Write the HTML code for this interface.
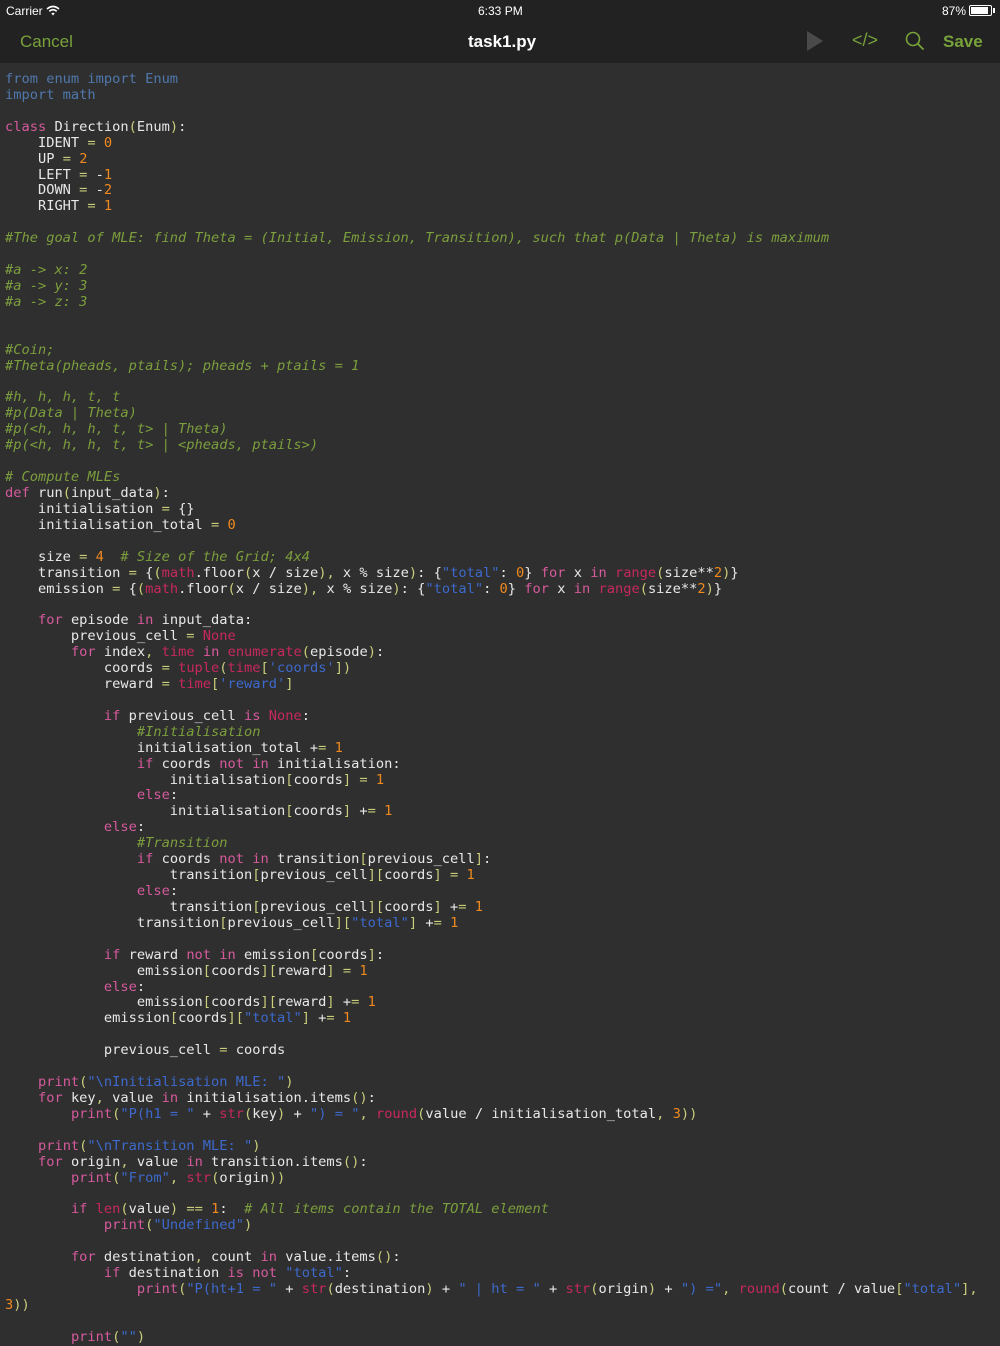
<!DOCTYPE html>
<html><head><meta charset="utf-8"><style>
*{margin:0;padding:0;box-sizing:border-box}
body{width:1000px;height:1334px;overflow:hidden;background:#2f2f2f;font-family:"Liberation Sans",sans-serif}
#top{position:absolute;left:0;top:0;width:1000px;height:63px;background:#222222}
.sb{position:absolute;top:4px;font-size:12px;color:#fff}
.nav{position:absolute;top:32px;font-size:17px;color:#78a23a}
#code{position:absolute;left:5px;top:72px;font-family:"DejaVu Sans Mono","Liberation Mono",monospace;font-size:13.7px;line-height:15.92px;white-space:pre;color:#e8e8e8}
.k{color:#d65a9c}.b{color:#c7285e}.s{color:#3d69cc}.n{color:#f08a1e}.c{color:#7c9e3d;font-style:italic}.p{color:#c9cc7a}.i{color:#5078ac}
</style></head><body>
<div id="top">
<div class="sb" style="left:6px">Carrier <svg width="14" height="11" viewBox="0 0 14 11" style="vertical-align:-1px"><path d="M1 4 Q7 -1 13 4" stroke="#fff" stroke-width="1.6" fill="none"/><path d="M3.3 6.3 Q7 3 10.7 6.3" stroke="#fff" stroke-width="1.6" fill="none"/><path d="M5.3 8.4 L7 10.5 L8.7 8.4 Q7 7 5.3 8.4Z" fill="#fff"/></svg></div>
<div class="sb" style="left:478px">6:33 PM</div>
<div class="sb" style="left:942px">87%</div>
<div style="position:absolute;left:969px;top:5px;width:23px;height:11px;border:1px solid #fff;border-radius:2px"><div style="margin:1px;width:17px;height:7px;background:#fff"></div></div>
<div style="position:absolute;left:993px;top:8px;width:2px;height:5px;background:#fff"></div>
<div class="nav" style="left:20px">Cancel</div>
<div class="nav" style="left:468px;color:#fff;font-weight:bold;font-size:17px">task1.py</div>
<svg style="position:absolute;left:806px;top:31px" width="18" height="20"><path d="M1 0 L17 10 L1 20Z" fill="#4a4a4a"/></svg>
<div class="nav" style="left:852px;top:30px;font-size:18px">&lt;/&gt;</div>
<svg style="position:absolute;left:905px;top:31px" width="20" height="20"><circle cx="8" cy="8" r="6.5" stroke="#78a23a" stroke-width="1.6" fill="none"/><path d="M12.6 12.6 L18.5 18.5" stroke="#78a23a" stroke-width="1.8"/></svg>
<div class="nav" style="left:943px;font-weight:bold">Save</div>
</div>
<div id="code"><span class="i">from enum import Enum</span>
<span class="i">import math</span>

<span class="k">class</span> Direction<span class="p">(</span>Enum<span class="p">)</span>:
    IDENT <span class="p">=</span> <span class="n">0</span>
    UP <span class="p">=</span> <span class="n">2</span>
    LEFT <span class="p">=</span> -<span class="n">1</span>
    DOWN <span class="p">=</span> -<span class="n">2</span>
    RIGHT <span class="p">=</span> <span class="n">1</span>

<span class="c">#The goal of MLE: find Theta = (Initial, Emission, Transition), such that p(Data | Theta) is maximum</span>

<span class="c">#a -&gt; x: 2</span>
<span class="c">#a -&gt; y: 3</span>
<span class="c">#a -&gt; z: 3</span>


<span class="c">#Coin;</span>
<span class="c">#Theta(pheads, ptails); pheads + ptails = 1</span>

<span class="c">#h, h, h, t, t</span>
<span class="c">#p(Data | Theta)</span>
<span class="c">#p(&lt;h, h, h, t, t&gt; | Theta)</span>
<span class="c">#p(&lt;h, h, h, t, t&gt; | &lt;pheads, ptails&gt;)</span>

<span class="c"># Compute MLEs</span>
<span class="k">def</span> run<span class="p">(</span>input_data<span class="p">)</span>:
    initialisation <span class="p">=</span> {}
    initialisation_total <span class="p">=</span> <span class="n">0</span>

    size <span class="p">=</span> <span class="n">4</span>  <span class="c"># Size of the Grid; 4x4</span>
    transition <span class="p">=</span> {<span class="p">(</span><span class="b">math</span>.floor<span class="p">(</span>x / size<span class="p">),</span> x % size<span class="p">)</span>: {<span class="s">"total"</span>: <span class="n">0</span>} <span class="k">for</span> x <span class="k">in</span> <span class="b">range</span><span class="p">(</span>size**<span class="n">2</span><span class="p">)</span>}
    emission <span class="p">=</span> {<span class="p">(</span><span class="b">math</span>.floor<span class="p">(</span>x / size<span class="p">),</span> x % size<span class="p">)</span>: {<span class="s">"total"</span>: <span class="n">0</span>} <span class="k">for</span> x <span class="k">in</span> <span class="b">range</span><span class="p">(</span>size**<span class="n">2</span><span class="p">)</span>}

    <span class="k">for</span> episode <span class="k">in</span> input_data:
        previous_cell <span class="p">=</span> <span class="b">None</span>
        <span class="k">for</span> index<span class="p">,</span> <span class="b">time</span> <span class="k">in</span> <span class="b">enumerate</span><span class="p">(</span>episode<span class="p">)</span>:
            coords <span class="p">=</span> <span class="b">tuple</span><span class="p">(</span><span class="b">time</span><span class="p">[</span><span class="s">'coords'</span><span class="p">])</span>
            reward <span class="p">=</span> <span class="b">time</span><span class="p">[</span><span class="s">'reward'</span><span class="p">]</span>

            <span class="k">if</span> previous_cell <span class="k">is</span> <span class="b">None</span>:
                <span class="c">#Initialisation</span>
                initialisation_total +<span class="p">=</span> <span class="n">1</span>
                <span class="k">if</span> coords <span class="k">not in</span> initialisation:
                    initialisation<span class="p">[</span>coords<span class="p">]</span> <span class="p">=</span> <span class="n">1</span>
                <span class="k">else</span>:
                    initialisation<span class="p">[</span>coords<span class="p">]</span> +<span class="p">=</span> <span class="n">1</span>
            <span class="k">else</span>:
                <span class="c">#Transition</span>
                <span class="k">if</span> coords <span class="k">not in</span> transition<span class="p">[</span>previous_cell<span class="p">]</span>:
                    transition<span class="p">[</span>previous_cell<span class="p">][</span>coords<span class="p">]</span> <span class="p">=</span> <span class="n">1</span>
                <span class="k">else</span>:
                    transition<span class="p">[</span>previous_cell<span class="p">][</span>coords<span class="p">]</span> +<span class="p">=</span> <span class="n">1</span>
                transition<span class="p">[</span>previous_cell<span class="p">][</span><span class="s">"total"</span><span class="p">]</span> +<span class="p">=</span> <span class="n">1</span>

            <span class="k">if</span> reward <span class="k">not in</span> emission<span class="p">[</span>coords<span class="p">]</span>:
                emission<span class="p">[</span>coords<span class="p">][</span>reward<span class="p">]</span> <span class="p">=</span> <span class="n">1</span>
            <span class="k">else</span>:
                emission<span class="p">[</span>coords<span class="p">][</span>reward<span class="p">]</span> +<span class="p">=</span> <span class="n">1</span>
            emission<span class="p">[</span>coords<span class="p">][</span><span class="s">"total"</span><span class="p">]</span> +<span class="p">=</span> <span class="n">1</span>

            previous_cell <span class="p">=</span> coords

    <span class="k">print</span><span class="p">(</span><span class="s">"\nInitialisation MLE: "</span><span class="p">)</span>
    <span class="k">for</span> key<span class="p">,</span> value <span class="k">in</span> initialisation.items<span class="p">()</span>:
        <span class="k">print</span><span class="p">(</span><span class="s">"P(h1 = "</span> + <span class="b">str</span><span class="p">(</span>key<span class="p">)</span> + <span class="s">") = "</span><span class="p">,</span> <span class="b">round</span><span class="p">(</span>value / initialisation_total<span class="p">,</span> <span class="n">3</span><span class="p">))</span>

    <span class="k">print</span><span class="p">(</span><span class="s">"\nTransition MLE: "</span><span class="p">)</span>
    <span class="k">for</span> origin<span class="p">,</span> value <span class="k">in</span> transition.items<span class="p">()</span>:
        <span class="k">print</span><span class="p">(</span><span class="s">"From"</span><span class="p">,</span> <span class="b">str</span><span class="p">(</span>origin<span class="p">))</span>

        <span class="k">if</span> <span class="b">len</span><span class="p">(</span>value<span class="p">)</span> <span class="p">==</span> <span class="n">1</span>:  <span class="c"># All items contain the TOTAL element</span>
            <span class="k">print</span><span class="p">(</span><span class="s">"Undefined"</span><span class="p">)</span>

        <span class="k">for</span> destination<span class="p">,</span> count <span class="k">in</span> value.items<span class="p">()</span>:
            <span class="k">if</span> destination <span class="k">is not</span> <span class="s">"total"</span>:
                <span class="k">print</span><span class="p">(</span><span class="s">"P(ht+1 = "</span> + <span class="b">str</span><span class="p">(</span>destination<span class="p">)</span> + <span class="s">" | ht = "</span> + <span class="b">str</span><span class="p">(</span>origin<span class="p">)</span> + <span class="s">") ="</span><span class="p">,</span> <span class="b">round</span><span class="p">(</span>count / value<span class="p">[</span><span class="s">"total"</span><span class="p">],</span>
<span class="n">3</span><span class="p">))</span>

        <span class="k">print</span><span class="p">(</span><span class="s">""</span><span class="p">)</span></div>
</body></html>
